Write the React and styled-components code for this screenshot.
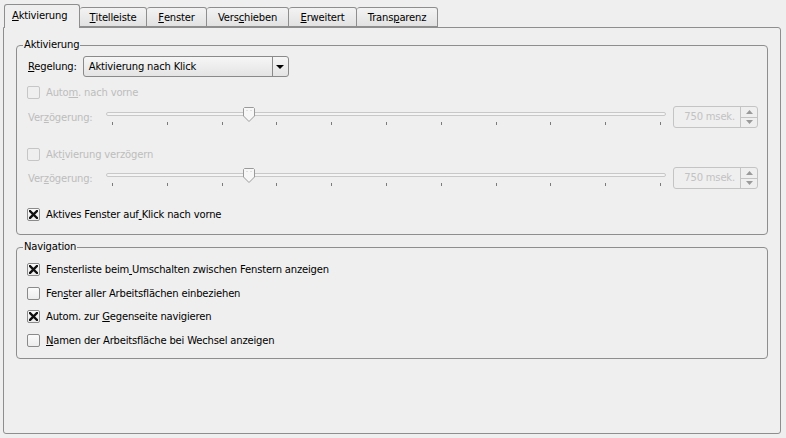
import styled, { createGlobalStyle } from "styled-components";

const GlobalStyle = createGlobalStyle`
    html, body {
        margin: 0;
        padding: 0;
        background: #efefef;
    }
    body {
        font-family: "DejaVu Sans", "Liberation Sans", sans-serif;
        font-size: 10px;
        letter-spacing: -0.18px;
        color: #000;
    }
`

const Window = styled.div`
    width: 786px;
    height: 438px;
    box-sizing: border-box;
    padding: 3px 5px 4px 3px;
    display: flex;
    flex-direction: column;
    background: #efefef;
`

const TabBar = styled.div`
    display: flex;
    align-items: flex-end;
    height: 24px;
    padding-left: 1px;
    position: relative;
    z-index: 1;
`

const Tab = styled.div`
    box-sizing: border-box;
    width: ${p => p.$w}px;
    height: ${p => p.$active ? 24 : 20}px;
    margin-bottom: ${p => p.$active ? -1 : 0}px;
    border: 1px solid #8e8e8e;
    border-bottom: ${p => p.$active ? "none" : "1px solid #8e8e8e"};
    border-left: ${p => p.$active ? "1px solid #8e8e8e" : "none"};
    border-radius: 3px 3px 0 0;
    background: ${p => p.$active ? "#efefef" : "linear-gradient(#f3f3f3, #e2e2e2)"};
    display: flex;
    align-items: center;
    justify-content: ${p => p.$active ? "flex-start" : "center"};
    padding-left: ${p => p.$active ? 7 : 0}px;
    padding-bottom: ${p => p.$active ? 3 : 0}px;
    white-space: nowrap;
`

const Panel = styled.div`
    flex: 1;
    box-sizing: border-box;
    border: 1px solid #8e8e8e;
    border-radius: 0 3px 3px 3px;
    padding: 10px 12px 0 12px;
    display: flex;
    flex-direction: column;
    gap: 5px;
`

const Group = styled.fieldset`
    margin: 0;
    padding: 0 0 0 11px;
    border: 1px solid #8e8e8e;
    border-radius: 4px;
    height: ${p => p.$h}px;
    box-sizing: border-box;
    min-width: 0;
`

const Legend = styled.legend`
    padding: 0 1px;
    margin-left: -5px;
    line-height: 14px;
`

const Row = styled.div`
    display: flex;
    align-items: center;
    height: ${p => p.$h || 16}px;
    margin-top: ${p => p.$mt || 0}px;
    color: ${p => p.$disabled ? "#bdbdbd" : "#000"};
    white-space: nowrap;
`

const Label = styled.span`
    width: ${p => p.$w ? `${p.$w}px` : "auto"};
    flex-shrink: 0;
`

const Combo = styled.div`
    margin-left: 6px;
    width: 206px;
    height: 21px;
    box-sizing: border-box;
    border: 1px solid #8a8a8a;
    border-radius: 3px;
    background: linear-gradient(#f6f6f6, #e4e4e4);
    display: flex;
    align-items: center;
`

const ComboText = styled.span`
    flex: 1;
    padding-left: 5px;
`

const ArrowBtn = styled.div`
    width: 15px;
    height: 100%;
    border-left: 1px solid #8a8a8a;
    display: flex;
    align-items: center;
    justify-content: center;
`

const Box = styled.span`
    width: 13px;
    height: 13px;
    box-sizing: border-box;
    border: 1px solid ${p => p.$disabled ? "#c6c6c6" : "#8a8a8a"};
    border-radius: 2px;
    background: ${p => p.$disabled ? "#efefef" : "linear-gradient(#fbfbfb, #ececec)"};
    margin: 0 6px 0 -1px;
    display: flex;
    align-items: center;
    justify-content: center;
    flex-shrink: 0;
`

const Slider = styled.div`
    position: relative;
    width: 560px;
    height: 22px;
    margin-left: 11px;
`

const Groove = styled.div`
    position: absolute;
    left: 0;
    right: 0;
    top: 6px;
    height: 4px;
    box-sizing: border-box;
    border: 1px solid #c8c8c8;
    border-radius: 2px;
    background: #f4f4f4;
`

const Ticks = styled.div`
    position: absolute;
    left: 6px;
    right: 5px;
    top: 16px;
    display: flex;
    justify-content: space-between;
`

const Tick = styled.span`
    width: 1px;
    height: 3px;
    background: #7a7a7a;
`

const Thumb = styled.svg`
    position: absolute;
    top: 1px;
`

const Spin = styled.div`
    margin-left: 7px;
    width: 85px;
    height: 22px;
    box-sizing: border-box;
    border: 1px solid #c4c4c4;
    border-radius: 3px;
    display: flex;
    color: #c2c2c2;
`

const SpinText = styled.span`
    flex: 1;
    text-align: right;
    padding-right: 5px;
    line-height: 20px;
`

const SpinBtns = styled.div`
    width: 16px;
    border-left: 1px solid #c4c4c4;
    display: flex;
    flex-direction: column;
`

const SpinBtn = styled.div`
    flex: 1;
    display: flex;
    align-items: center;
    justify-content: center;
    border-top: ${p => p.$down ? "1px solid #c4c4c4" : "none"};
`

const U = styled.span`
    text-decoration: underline;
`

function Mn({ text, at }) {
    return (
        <>
            {text.slice(0, at)}
            <U>{text[at]}</U>
            {text.slice(at + 1)}
        </>
    )
}

function Check({ checked, disabled, text, at, mt }) {
    return (
        <Row $mt={mt} $disabled={disabled}>
            <Box $disabled={disabled}>
                {checked &&
                    <svg width="9" height="9" viewBox="0 0 9 9">
                        <path d="M1 1 L8 8 M8 1 L1 8" stroke="#111" strokeWidth="2.4" strokeLinecap="square" />
                    </svg>}
            </Box>
            <span><Mn text={text} at={at} /></span>
        </Row>
    )
}

function DelayRow({ mt, value, max }) {
    const left = 6 + (value / max) * 548 - 6
    return (
        <Row $h={22} $mt={mt} $disabled>
            <Label $w={67}><Mn text="Verzögerung:" at={3} /></Label>
            <Slider>
                <Groove />
                <Ticks>
                    {Array.from({ length: 11 }).map((_, i) => <Tick key={i} />)}
                </Ticks>
                <Thumb width="12" height="15" viewBox="0 0 12 15" style={{ left }}>
                    <path d="M1.5 0.5 H10.5 L11.5 1.5 V9 L6 14.5 L0.5 9 V1.5 Z" fill="#f7f7f7" stroke="#9a9a9a" />
                    <path d="M4 3 V4 M8 3 V4" stroke="#c8c8c8" />
                </Thumb>
            </Slider>
            <Spin>
                <SpinText>750 msek.</SpinText>
                <SpinBtns>
                    <SpinBtn>
                        <svg width="7" height="4" viewBox="0 0 7 4"><path d="M0 4 L3.5 0 L7 4 Z" fill="#9a9a9a" /></svg>
                    </SpinBtn>
                    <SpinBtn $down>
                        <svg width="7" height="4" viewBox="0 0 7 4"><path d="M0 0 L3.5 4 L7 0 Z" fill="#9a9a9a" /></svg>
                    </SpinBtn>
                </SpinBtns>
            </Spin>
        </Row>
    )
}

const tabs = [
    { text: "Aktivierung", at: 0, w: 76 },
    { text: "Titelleiste", at: 0, w: 67 },
    { text: "Fenster", at: 0, w: 60 },
    { text: "Verschieben", at: 4, w: 82 },
    { text: "Erweitert", at: 0, w: 68 },
    { text: "Transparenz", at: 5, w: 81 },
]

export default function App() {
    return (
        <>
            <GlobalStyle />
            <Window>
                <TabBar>
                    {tabs.map((t, i) =>
                        <Tab key={t.text} $w={t.w} $active={i === 0}>
                            <Mn text={t.text} at={t.at} />
                        </Tab>
                    )}
                </TabBar>
                <Panel>
                    <Group $h={197}>
                        <Legend>Aktivierung</Legend>
                        <Row $h={21} $mt={4}>
                            <Label><Mn text="Regelung:" at={0} /></Label>
                            <Combo>
                                <ComboText>Aktivierung nach Klick</ComboText>
                                <ArrowBtn>
                                    <svg width="8" height="4" viewBox="0 0 8 4"><path d="M0 0 L8 0 L4 4 Z" fill="#000" /></svg>
                                </ArrowBtn>
                            </Combo>
                        </Row>
                        <Check disabled text="Autom. nach vorne" at={4} mt={7} />
                        <DelayRow mt={6} value={750} max={3000} />
                        <Check disabled text="Aktivierung verzögern" at={3} mt={18} />
                        <DelayRow mt={5} value={750} max={3000} />
                        <Check checked text="Aktives Fenster auf Klick nach vorne" at={19} mt={17} />
                    </Group>
                    <Group $h={119}>
                        <Legend>Navigation</Legend>
                        <Check checked text="Fensterliste beim Umschalten zwischen Fenstern anzeigen" at={17} mt={7} />
                        <Check text="Fenster aller Arbeitsflächen einbeziehen" at={3} mt={8} />
                        <Check checked text="Autom. zur Gegenseite navigieren" at={11} mt={7} />
                        <Check text="Namen der Arbeitsfläche bei Wechsel anzeigen" at={0} mt={8} />
                    </Group>
                </Panel>
            </Window>
        </>
    )
}
